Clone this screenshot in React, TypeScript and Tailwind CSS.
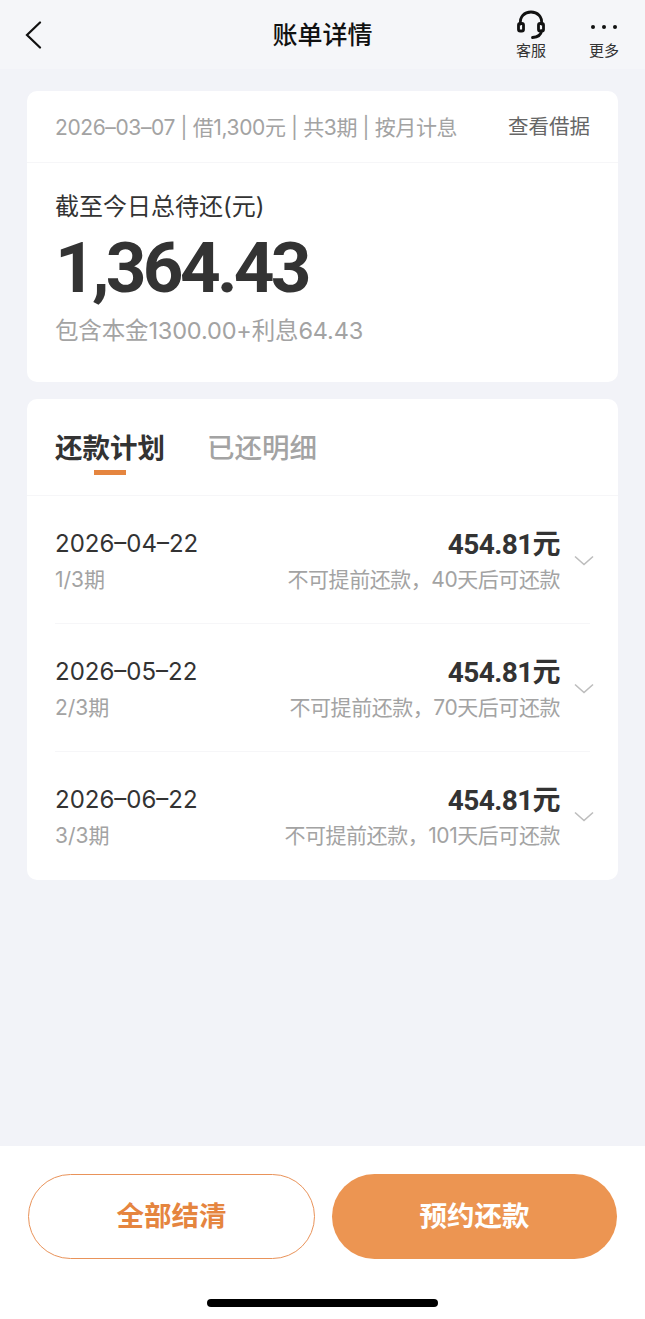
const font = { fontFamily: '"Inter", "Noto Sans CJK SC", sans-serif' };
const numFont = { fontFamily: 'Roboto, "Noto Sans CJK SC", sans-serif' };

const rows = [
  { date: "2026-04-22", term: "1/3期", note: "不可提前还款，40天后可还款" },
  { date: "2026-05-22", term: "2/3期", note: "不可提前还款，70天后可还款" },
  { date: "2026-06-22", term: "3/3期", note: "不可提前还款，101天后可还款" },
];

function Headset() {
  return (
    <svg width="32" height="30" viewBox="0 0 32 30" fill="none" stroke="#111" strokeLinecap="round">
      <path d="M5.5 14 C4.5 6.5 9.5 2 16 2 C22.5 2 27.5 6.5 26.5 14" strokeWidth="2.8" />
      <rect x="3.5" y="13.5" width="5" height="7.5" rx="1.6" strokeWidth="2.8" />
      <rect x="23.5" y="13.5" width="5" height="7.5" rx="1.6" strokeWidth="2.8" />
      <path d="M26.5 21 C26 25.5 22.5 27 17.5 27.5" strokeWidth="2.8" />
    </svg>
  );
}

function Row({ date, term, note, last }: { date: string; term: string; note: string; last?: boolean }) {
  return (
    <div className="px-[28px]">
      <div className={`flex h-[128px] items-start justify-between pt-[29px] ${last ? "" : "border-b border-[#f6f6f8]"}`}>
        <div>
          <div className="text-[24px] leading-[38px] text-[#333]">{date.replace(/-/g, "–")}</div>
          <div className="mt-[-1px] text-[21px] leading-[36px] text-[#a3a3a3]">{term}</div>
        </div>
        <div className="flex items-start">
          <div className="text-right">
            <div className="pt-[1px] text-[28px] font-bold leading-[37px] tracking-[-0.6px] text-[#333]" style={numFont}>454.81元</div>
            <div className="mt-[-1px] text-[21px] leading-[36px] tracking-[-0.45px] text-[#a3a3a3]">{note}</div>
          </div>
          <svg className="ml-[14px] mt-[30px] mr-[-4px]" width="20" height="12" viewBox="0 0 20 12" fill="none" stroke="#bdbdbd" strokeWidth="1.6">
            <path d="M1 1.5 L10 9.5 L19 1.5" />
          </svg>
        </div>
      </div>
    </div>
  );
}

export default function App() {
  return (
    <div className="flex h-[1319px] w-[645px] flex-col overflow-hidden bg-[#f2f3f8]" style={font}>
      <header className="relative flex h-[69px] shrink-0 items-center justify-center bg-[#f5f6f9] pt-[2px]">
        <svg className="absolute left-[25px] top-[21px]" width="17" height="28" viewBox="0 0 17 28" fill="none" stroke="#111" strokeWidth="2.2" strokeLinecap="round">
          <path d="M15 1.5 L2 14 L15 26.5" />
        </svg>
        <h1 className="text-[25px] font-medium text-[#111]">账单详情</h1>
        <div className="absolute left-[515px] top-[10px] flex w-[32px] flex-col items-center">
          <Headset />
          <span className="mt-[1px] whitespace-nowrap text-[15px] leading-[20px] text-[#333]">客服</span>
        </div>
        <div className="absolute left-[588px] top-[10px] flex w-[32px] flex-col items-center">
          <div className="flex h-[30px] items-start gap-[6.5px] pt-[14.5px]">
            <span className="size-[4.5px] rounded-full bg-[#111]" />
            <span className="size-[4.5px] rounded-full bg-[#111]" />
            <span className="size-[4.5px] rounded-full bg-[#111]" />
          </div>
          <span className="mt-[1px] whitespace-nowrap text-[15px] leading-[20px] text-[#333]">更多</span>
        </div>
      </header>

      <main className="flex flex-1 flex-col gap-[17px] px-[27px] pt-[22px]">
        <section className="h-[291px] rounded-[10px] bg-white">
          <div className="flex h-[72px] items-center justify-between border-b border-[#f6f6f8] px-[28px] pt-[2px]">
            <span className="whitespace-nowrap text-[21px] tracking-[-0.38px] text-[#a3a3a3]">2026–03–07 | 借1,300元 | 共3期 | 按月计息</span>
            <span className="text-[20.5px] text-[#666]">查看借据</span>
          </div>
          <div className="px-[28px] pt-[26px]">
            <div className="text-[24px] leading-[36px] text-[#333]">截至今日总待还(元)</div>
            <div className="mt-[3px] text-[71px] font-bold leading-[80px] tracking-[-3.7px] text-[#333]" style={numFont}>1,364.43</div>
            <div className="mt-[5px] text-[23.5px] leading-[36px] tracking-[-0.15px] text-[#a3a3a3]">包含本金1300.00+利息64.43</div>
          </div>
        </section>

        <section className="h-[481px] rounded-[10px] bg-white">
          <div className="flex h-[97px] gap-[42px] border-b border-[#f6f6f8] px-[28px] pt-[29px]">
            <div className="relative">
              <div className="text-[27.5px] font-bold leading-[40px] text-[#333]">还款计划</div>
              <div className="absolute left-[39px] top-[42px] h-[5px] w-[32px] bg-[#e5853f]" />
            </div>
            <div className="text-[27.5px] font-medium leading-[40px] text-[#a3a3a3]">已还明细</div>
          </div>
          {rows.map((r, i) => (
            <Row key={r.date} {...r} last={i === rows.length - 1} />
          ))}
        </section>
      </main>

      <footer className="h-[173px] shrink-0 bg-white">
        <div className="flex gap-[17px] px-[28px] pt-[28px]">
          <button className="flex h-[85px] flex-1 items-center justify-center rounded-full border-[1.5px] border-[#e9935a] pt-[1px] text-[27.5px] font-bold text-[#e5853f]">全部结清</button>
          <button className="flex h-[85px] flex-1 items-center justify-center rounded-full bg-[#ec9552] pt-[1px] text-[27.5px] font-bold text-white">预约还款</button>
        </div>
        <div className="mx-auto mt-[40px] h-[8px] w-[231px] rounded-full bg-black" />
      </footer>
    </div>
  );
}
